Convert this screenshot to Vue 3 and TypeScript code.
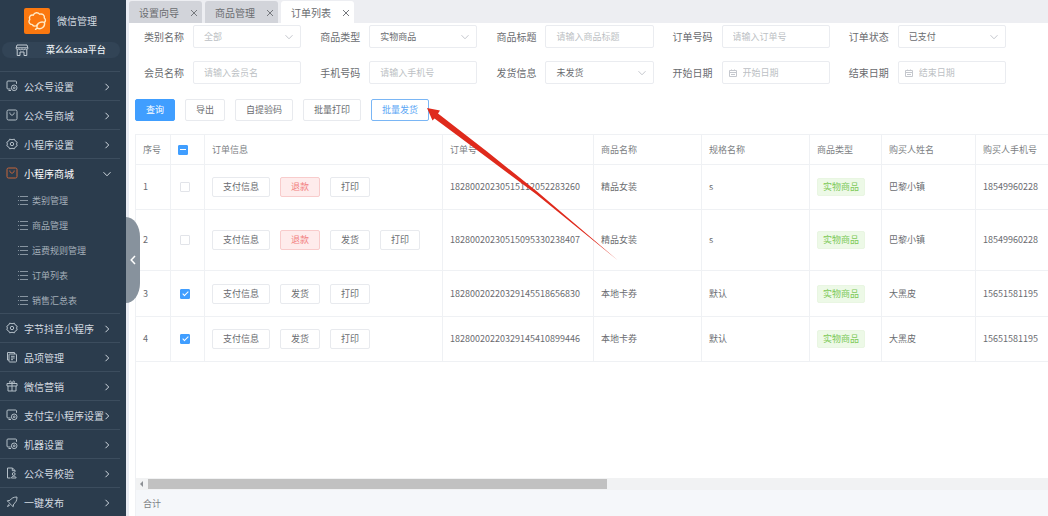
<script setup lang="ts">
import { ref, computed } from 'vue'

type IconName = 'screen' | 'bag' | 'hex' | 'docs' | 'gift' | 'file' | 'rocket'

interface MenuItem {
  label: string
  icon: IconName
  children?: string[]
}

const menu: MenuItem[] = [
  { label: '公众号设置', icon: 'screen' },
  { label: '公众号商城', icon: 'bag' },
  { label: '小程序设置', icon: 'hex' },
  {
    label: '小程序商城',
    icon: 'bag',
    children: ['类别管理', '商品管理', '运费规则管理', '订单列表', '销售汇总表'],
  },
  { label: '字节抖音小程序', icon: 'hex' },
  { label: '品项管理', icon: 'docs' },
  { label: '微信营销', icon: 'gift' },
  { label: '支付宝小程序设置', icon: 'screen' },
  { label: '机器设置', icon: 'screen' },
  { label: '公众号校验', icon: 'file' },
  { label: '一键发布', icon: 'rocket' },
]

const tabs = ['设置向导', '商品管理', '订单列表']
const activeTab = ref('订单列表')

interface Field {
  id: string
  label: string
  kind: 'select' | 'text' | 'date'
  text: string
  muted?: boolean
}

const fields: Field[] = [
  { id: 'category', label: '类别名称', kind: 'select', text: '全部', muted: true },
  { id: 'type', label: '商品类型', kind: 'select', text: '实物商品' },
  { id: 'title', label: '商品标题', kind: 'text', text: '请输入商品标题' },
  { id: 'order', label: '订单号码', kind: 'text', text: '请输入订单号' },
  { id: 'status', label: '订单状态', kind: 'select', text: '已支付' },
  { id: 'member', label: '会员名称', kind: 'text', text: '请输入会员名' },
  { id: 'phone', label: '手机号码', kind: 'text', text: '请输入手机号' },
  { id: 'ship', label: '发货信息', kind: 'select', text: '未发货' },
  { id: 'start', label: '开始日期', kind: 'date', text: '开始日期' },
  { id: 'end', label: '结束日期', kind: 'date', text: '结束日期' },
]

interface Order {
  id: number
  checked: boolean
  size: 'short' | 'mid' | 'tall'
  actions: string[]
  no: string
  product: string
  spec: string
  kind: string
  buyer: string
  phone: string
}

const orders = ref<Order[]>([
  { id: 1, checked: false, size: 'short', actions: ['支付信息', '退款', '打印'], no: '18280020230515112052283260', product: '精品女装', spec: 's', kind: '实物商品', buyer: '巴黎小镇', phone: '18549960228' },
  { id: 2, checked: false, size: 'tall', actions: ['支付信息', '退款', '发货', '打印'], no: '18280020230515095330238407', product: '精品女装', spec: 's', kind: '实物商品', buyer: '巴黎小镇', phone: '18549960228' },
  { id: 3, checked: true, size: 'mid', actions: ['支付信息', '发货', '打印'], no: '18280020220329145518656830', product: '本地卡券', spec: '默认', kind: '实物商品', buyer: '大黑皮', phone: '15651581195' },
  { id: 4, checked: true, size: 'short', actions: ['支付信息', '发货', '打印'], no: '18280020220329145410899446', product: '本地卡券', spec: '默认', kind: '实物商品', buyer: '大黑皮', phone: '15651581195' },
])

const allChecked = computed(() => orders.value.every((o) => o.checked))
const someChecked = computed(() => !allChecked.value && orders.value.some((o) => o.checked))

function toggleAll(event: Event) {
  const on = (event.target as HTMLInputElement).checked
  orders.value.forEach((o) => (o.checked = on))
}
</script>

<template>
  <div class="app">
    <aside class="sidebar">
      <div class="brand">
        <svg class="logo" viewBox="0 0 26 26" aria-hidden="true">
          <rect width="26" height="26" rx="2" fill="#fb780f" />
          <g fill="none" stroke="#ffe9c4" stroke-width="1.4" stroke-linecap="round" stroke-linejoin="round">
            <path d="M13.500 16.500C12.500 18.600 9.300 18.700 8.300 16.600C5.300 16.600 3.900 13.500 5.800 11.500C4.500 8.600 6.800 6.600 9.300 7.200C10.300 4.300 14 4 15.500 6.200C18.500 5.200 21 7.300 20.300 10C21.800 11.200 21.800 13.200 20.500 14.300" />
            <path d="M13.200 20.200C11.800 16.500 15.500 12.800 20.500 14.300C21.300 18.600 17.500 22 13.200 20.200L11.500 21.300" />
          </g>
        </svg>
        <span>微信管理</span>
      </div>
      <div class="platform">
        <svg class="store" viewBox="0 0 14 14" aria-hidden="true">
          <path d="M2 2H12L13 5.500Q12 7.500 10.200 6Q8.600 7.500 7 6Q5.400 7.500 3.800 6Q2 7.500 1 5.500ZM2.200 7V12.500H5V9H9V12.500H11.800V7M1.200 4.800H12.800" />
        </svg>
        <span>菜么么saa平台</span>
      </div>
      <nav class="menu">
        <div v-for="item in menu" :key="item.label" class="group">
          <a href="#" class="item" :class="{ open: item.children }">
            <svg class="icon" viewBox="0 0 12 12" aria-hidden="true">
              <g v-if="item.icon === 'screen'">
                <path d="M4.500 9H2Q1 9 1 8V2Q1 1 2 1H9.500Q10.500 1 10.500 2V3.800M2.500 10.500H5" />
                <circle cx="8.200" cy="7.800" r="2.800" />
                <circle cx="8.200" cy="7.800" r="0.900" />
              </g>
              <g v-else-if="item.icon === 'bag'">
                <rect x="1" y="1" width="10" height="10" rx="1.500" />
                <path d="M3.800 3.500C4 7 8 7 8.200 3.500" />
              </g>
              <g v-else-if="item.icon === 'hex'">
                <path d="M3.600 1.200Q6 2.200 8.400 1.200L9.300 3L11.200 4.200Q10 6 11.200 7.800L9.300 9L8.400 10.800Q6 9.800 3.600 10.800L2.700 9L0.800 7.800Q2 6 0.800 4.200L2.700 3Z" />
                <circle cx="6" cy="6" r="1.700" />
              </g>
              <g v-else-if="item.icon === 'docs'">
                <path d="M3 9H1.500V1.500H8.500V3" />
                <rect x="3" y="3" width="7.500" height="8" rx="0.800" />
                <path d="M5 5.300H8.700M5 7H8.700M5 8.700H7" />
              </g>
              <g v-else-if="item.icon === 'gift'">
                <path d="M1 3.500H11V6H1ZM2 6V11H10V6M6 3.500V11M6 3.500C3 3.500 3 1 4.300 1C5.500 1 6 3.500 6 3.500C6 3.500 6.500 1 7.700 1C9 1 9 3.500 6 3.500" />
              </g>
              <g v-else-if="item.icon === 'file'">
                <path d="M4.500 11H1.500V1H6.500L9 3.500V5M6.300 1V3.700H9" />
                <circle cx="7.700" cy="7" r="1.400" />
                <path d="M5.400 11C5.400 8.600 10.100 8.600 10.100 11Z" />
              </g>
              <g v-else>
                <path d="M11 1C7.500 1 5.500 2.200 4 4.300L1.300 4.800L2.800 6.500L5.500 9.200L7.200 10.700L7.700 8C9.800 6.500 11 4.500 11 1ZM2.800 8.300L1.500 10.500L3.700 9.300" />
              </g>
            </svg>
            <span class="label">{{ item.label }}</span>
            <svg class="chev" viewBox="0 0 8 8" aria-hidden="true">
              <path :d="item.children ? 'M0.500 2.200L4 5.800L7.500 2.200' : 'M2.500 0.800L5.700 4L2.500 7.200'" />
            </svg>
          </a>
          <div v-if="item.children" class="sub">
            <a v-for="child in item.children" :key="child" href="#" class="subitem">
              <svg class="list" viewBox="0 0 10 10" aria-hidden="true">
                <path d="M0 0.500H1M2 0.500H10M0 4.500H1M2 4.500H10M0 8.500H1M2 8.500H10" />
              </svg>
              <span>{{ child }}</span>
            </a>
          </div>
        </div>
      </nav>
      <button class="collapse" type="button" aria-label="收起菜单">
        <svg viewBox="0 0 6 10" aria-hidden="true"><path d="M5 1L1.200 5L5 9" /></svg>
      </button>
    </aside>

    <main class="main">
      <div class="tabs">
        <div v-for="tab in tabs" :key="tab" class="tab" :class="{ active: tab === activeTab }">
          <button type="button" class="tab-name" @click="activeTab = tab">{{ tab }}</button>
          <button type="button" class="tab-close" :aria-label="'关闭' + tab">
            <svg viewBox="0 0 8 8" aria-hidden="true"><path d="M1 1L7 7M7 1L1 7" /></svg>
          </button>
        </div>
      </div>

      <form class="filters" @submit.prevent>
        <div v-for="f in fields" :key="f.id" class="field">
          <label :for="f.id">{{ f.label }}</label>
          <div class="control">
            <template v-if="f.kind === 'select'">
              <select :id="f.id" :class="{ muted: f.muted }">
                <option>{{ f.text }}</option>
              </select>
              <svg class="caret" viewBox="0 0 8 8" aria-hidden="true"><path d="M0.500 2.200L4 5.800L7.500 2.200" /></svg>
            </template>
            <template v-else>
              <svg v-if="f.kind === 'date'" class="cal" viewBox="0 0 8 8" aria-hidden="true">
                <path d="M0.500 1.500H7.500V7.500H0.500ZM0.500 3.500H7.500M2.500 0.500V2M5.500 0.500V2M2 5.500H6" />
              </svg>
              <input :id="f.id" type="text" :placeholder="f.text" :class="{ dated: f.kind === 'date' }" />
            </template>
          </div>
        </div>
      </form>

      <div class="toolbar">
        <button type="button" class="btn primary">查询</button>
        <button type="button" class="btn">导出</button>
        <button type="button" class="btn">自提验码</button>
        <button type="button" class="btn">批量打印</button>
        <div class="pointed">
          <button type="button" class="btn focus">批量发货</button>
          <svg class="arrow" viewBox="0 0 192 154" aria-hidden="true">
            <path d="M0 0L13 2.500L11 5.500L60 43.500L110 83.500L191 152.500L109 86L58 48L7.500 10.500L5.500 12.500Z" fill="#df2a1c" />
          </svg>
        </div>
      </div>

      <section class="grid">
        <div class="scroller">
          <table>
            <colgroup>
              <col class="c-no" /><col class="c-check" /><col class="c-info" /><col class="c-order" />
              <col class="c-name" /><col class="c-name" /><col class="c-type" /><col class="c-buyer" /><col />
            </colgroup>
            <thead>
              <tr>
                <th>序号</th>
                <th>
                  <input type="checkbox" aria-label="全选" :checked="allChecked" :indeterminate="someChecked" @change="toggleAll" />
                </th>
                <th>订单信息</th>
                <th>订单号</th>
                <th>商品名称</th>
                <th>规格名称</th>
                <th>商品类型</th>
                <th>购买人姓名</th>
                <th>购买人手机号</th>
              </tr>
            </thead>
            <tbody>
              <tr v-for="o in orders" :key="o.id" :class="o.size">
                <td>{{ o.id }}</td>
                <td class="pick"><input v-model="o.checked" type="checkbox" :aria-label="'选择订单' + o.id" /></td>
                <td>
                  <div class="actions">
                    <button v-for="a in o.actions" :key="a" type="button" class="btn small" :class="{ danger: a === '退款' }">{{ a }}</button>
                  </div>
                </td>
                <td>{{ o.no }}</td>
                <td>{{ o.product }}</td>
                <td>{{ o.spec }}</td>
                <td><span class="tag">{{ o.kind }}</span></td>
                <td>{{ o.buyer }}</td>
                <td>{{ o.phone }}</td>
              </tr>
            </tbody>
          </table>
        </div>
        <div class="hbar">
          <span class="hbar-arrow"></span>
          <span class="hbar-track"><span class="hbar-thumb"></span></span>
        </div>
        <div class="total">合计</div>
      </section>
    </main>
  </div>
</template>

<style>
body {
  margin: 0;
}
</style>

<style scoped>
.app {
  display: flex;
  height: 100vh;
  min-height: 516px;
  overflow: hidden;
  background: #fff;
  color: #6a6c70;
  font-family: "Noto Sans CJK SC", "Noto Sans", sans-serif;
  font-size: 9px;
  line-height: 14px;
}
.app * {
  box-sizing: border-box;
}
button,
input,
select {
  margin: 0;
  padding: 0;
  border: 0;
  background: none;
  color: inherit;
  font: inherit;
}
a {
  color: inherit;
  text-decoration: none;
}
svg {
  display: block;
  flex: none;
  fill: none;
}
.sidebar {
  position: relative;
  flex: none;
  width: 126px;
  background: #2b3c4d;
  color: #d3dae0;
}
.brand {
  display: flex;
  align-items: center;
  gap: 7px;
  height: 42px;
  padding-left: 24px;
  font-size: 10px;
}
.logo {
  width: 26px;
  height: 26px;
}
.platform {
  display: flex;
  align-items: center;
  gap: 17px;
  height: 16px;
  margin: 0 6px 13px 2px;
  padding-left: 13px;
  border-radius: 8px;
  background: #324456;
  color: #eef2f5;
  font-weight: 500;
  white-space: nowrap;
}
.store {
  width: 14px;
  height: 14px;
  stroke: #c3ccd4;
}
.menu {
  width: 120px;
}
.item {
  display: flex;
  align-items: center;
  gap: 6px;
  height: 29px;
  padding: 1px 9px 0 6px;
  border-top: 1px solid #3c4d5e;
  font-size: 10px;
  white-space: nowrap;
}
.icon {
  width: 12px;
  height: 12px;
  margin-bottom: 2px;
  stroke: #b4bfc8;
}
.open {
  color: #fff;
}
.open .icon {
  stroke: #c9663b;
}
.label {
  flex: 1;
  min-width: 0;
}
.chev {
  width: 8px;
  height: 8px;
  stroke: #d0d8df;
}
.sub {
  padding-top: 1px;
  color: #a3aeb8;
}
.subitem {
  display: flex;
  align-items: center;
  gap: 4px;
  height: 25px;
  padding-left: 18px;
}
.list {
  width: 10px;
  height: 10px;
  stroke: #8794a0;
}
.collapse {
  position: absolute;
  top: 217px;
  left: 100%;
  z-index: 2;
  display: flex;
  align-items: center;
  justify-content: center;
  width: 14px;
  height: 86px;
  border-radius: 0 14px 14px 0 / 0 20px 20px 0;
  background: #87929d;
}
.collapse svg {
  width: 6px;
  height: 10px;
  stroke: #fff;
  stroke-width: 1.5;
}
.main {
  display: flex;
  flex: 1;
  flex-direction: column;
  min-width: 0;
  border-left: 3px solid #e9ecf3;
}
.tabs {
  display: flex;
  align-items: flex-end;
  gap: 3px;
  height: 23px;
  background: #edeef2;
  font-size: 10px;
}
.tab {
  display: flex;
  align-items: center;
  gap: 11px;
  height: 22px;
  padding: 2px 4px 0 10px;
  border-radius: 3px 3px 0 0;
  background: #d2d4da;
}
.tab.active {
  background: #fff;
}
.tab-close svg {
  width: 8px;
  height: 8px;
  stroke: #75787d;
}
.filters {
  display: grid;
  grid-template-columns: repeat(5, 1fr);
  gap: 13px 19px;
  padding: 2px 42px 0 15px;
}
.field {
  display: flex;
  align-items: center;
  gap: 9px;
}
.field label {
  flex: none;
  font-size: 10px;
}
.control {
  position: relative;
  flex: 1;
  min-width: 0;
}
.control input,
.control select {
  display: block;
  width: 100%;
  height: 23px;
  padding: 0 10px;
  border: 1px solid #eaecf0;
  border-radius: 2px;
  background: #fff;
  appearance: none;
}
.control .muted,
.control input::placeholder {
  color: #bcbfc4;
  opacity: 1;
}
.control .dated {
  padding-left: 20px;
}
.caret,
.cal {
  position: absolute;
  top: 8px;
  width: 8px;
  height: 8px;
  stroke: #c4c7cd;
  pointer-events: none;
}
.caret {
  right: 8px;
}
.cal {
  left: 7px;
}
.toolbar {
  display: flex;
  gap: 10px;
  padding: 15px 6px 13px;
}
.btn {
  height: 22px;
  padding: 0 10px;
  border: 1px solid #e8eaee;
  border-radius: 2px;
  background: #fff;
  white-space: nowrap;
}
.primary {
  border-color: #409eff;
  background: #409eff;
  color: #fff;
}
.focus {
  border-color: #7ab6f5;
  color: #5aa6f5;
}
.small {
  height: 20px;
}
.danger {
  border-color: #f8cccc;
  background: #feecec;
  color: #f28080;
}
.pointed {
  position: relative;
}
.arrow {
  position: absolute;
  top: 9px;
  left: 100%;
  z-index: 3;
  width: 192px;
  height: 154px;
  margin-left: -2px;
  pointer-events: none;
}
.grid {
  display: flex;
  flex: 1;
  flex-direction: column;
  min-height: 0;
  margin-left: 6px;
  border-top: 1px solid #eff1f4;
  border-left: 1px solid #eff1f4;
}
.scroller {
  flex: 1;
  min-height: 0;
  overflow: hidden;
}
table {
  width: 100%;
  min-width: 980px;
  border-spacing: 0;
  table-layout: fixed;
}
.c-no {
  width: 35px;
}
.c-check {
  width: 34px;
}
.c-info {
  width: 238px;
}
.c-order {
  width: 151px;
}
.c-name {
  width: 108px;
}
.c-type {
  width: 72px;
}
.c-buyer {
  width: 94px;
}
th,
td {
  padding: 0 0 0 7px;
  border-right: 1px solid #eff1f4;
  border-bottom: 1px solid #eff1f4;
  font-weight: 400;
  text-align: left;
  white-space: nowrap;
}
th {
  height: 30px;
  color: #7d7f84;
}
.short td {
  height: 45px;
}
.mid td {
  height: 46px;
}
.tall td {
  height: 61px;
}
td.pick {
  padding-left: 9px;
}
.actions {
  display: flex;
  gap: 10px;
}
input[type='checkbox'] {
  position: relative;
  display: block;
  width: 10px;
  height: 10px;
  border: 1px solid #e2e4e9;
  border-radius: 1px;
  background: #fff;
  appearance: none;
}
input[type='checkbox']:checked,
input[type='checkbox']:indeterminate {
  border-color: #409eff;
  background: #409eff;
}
input[type='checkbox']:checked::after {
  content: '';
  position: absolute;
  top: 0;
  left: 3px;
  width: 3px;
  height: 6px;
  border: solid #fff;
  border-width: 0 1px 1px 0;
  box-sizing: border-box;
  transform: rotate(45deg);
}
input[type='checkbox']:indeterminate::after {
  content: '';
  position: absolute;
  top: 3px;
  left: 1px;
  width: 6px;
  height: 1px;
  background: #fff;
}
.tag {
  display: inline-block;
  height: 18px;
  padding: 0 5px;
  border: 1px solid #e9f6e2;
  border-radius: 2px;
  background: #edf9e7;
  color: #7cc957;
  line-height: 16px;
  vertical-align: middle;
}
.hbar {
  display: flex;
  align-items: center;
  height: 12px;
  background: #f1f2f3;
}
.hbar-arrow {
  width: 0;
  margin: 0 5px 0 4px;
  border: 3px solid transparent;
  border-right-color: #8c8f94;
  border-left-width: 0;
}
.hbar-track {
  flex: 1;
  height: 10px;
}
.hbar-thumb {
  display: block;
  width: 51%;
  height: 100%;
  background: #c1c1c1;
}
.total {
  height: 26px;
  padding-left: 7px;
  background: #f5f7fa;
  color: #7d7f84;
  line-height: 28px;
}
</style>
